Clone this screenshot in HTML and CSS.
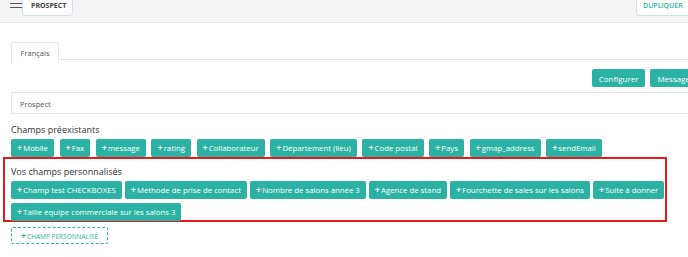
FILE: index.html
```html
<!DOCTYPE html>
<html lang="fr">
<head>
  <meta charset="UTF-8">
  <title>Prospect</title>
  <link rel="stylesheet" href="styles.css">
</head>
<body>

  <div class="topbar">
    <div class="topbar-left">
      <span class="burger"><i></i><i></i></span>
      <span class="crumb">PROSPECT</span>
    </div>
    <span class="dupliquer">DUPLIQUER</span>
  </div>

  <div class="page">
    <div class="tabs">
      <span class="tab">Français</span>
    </div>

    <div class="actions">
      <button class="btn">Configurer</button>
      <button class="btn">Message</button>
    </div>

    <div class="name-input">Prospect</div>

    <div class="section">
      <div class="section-title">Champs préexistants</div>
      <div class="chips">
        <span class="chip"><b>+</b>Mobile</span>
        <span class="chip"><b>+</b>Fax</span>
        <span class="chip"><b>+</b>message</span>
        <span class="chip"><b>+</b>rating</span>
        <span class="chip"><b>+</b>Collaborateur</span>
        <span class="chip"><b>+</b>Département (lieu)</span>
        <span class="chip"><b>+</b>Code postal</span>
        <span class="chip"><b>+</b>Pays</span>
        <span class="chip"><b>+</b>gmap_address</span>
        <span class="chip"><b>+</b>sendEmail</span>
      </div>
    </div>

    <div class="section custom">
      <div class="section-title">Vos champs personnalisés</div>
      <div class="chips">
        <span class="chip"><b>+</b>Champ test CHECKBOXES</span>
        <span class="chip"><b>+</b>Méthode de prise de contact</span>
        <span class="chip"><b>+</b>Nombre de salons année 3</span>
        <span class="chip"><b>+</b>Agence de stand</span>
        <span class="chip"><b>+</b>Fourchette de sales sur les salons</span>
        <span class="chip"><b>+</b>Suite à donner</span>
        <span class="chip"><b>+</b>Taille équipe commerciale sur les salons 3</span>
      </div>
    </div>

    <span class="add-custom"><b>+</b>CHAMP PERSONNALISÉ</span>
  </div>

</body>
</html>
```

FILE: styles.css
```css
body {
  margin: 0;
  font-family: "Open Sans", Arial, sans-serif;
  color: #333;
  background: #fff;
  overflow: hidden;
}
.topbar {
  height: 22px;
  background: #f4f4f4;
  border-bottom: 1px solid #e4e4e4;
  display: flex;
  justify-content: space-between;
  align-items: flex-start;
}
.topbar-left {
  display: flex;
  align-items: flex-start;
}
.burger {
  display: flex;
  flex-direction: column;
  gap: 3px;
  width: 12px;
  margin: 3px 0 0 10px;
}
.burger i {
  display: block;
  height: 1px;
  background: #555;
}
.crumb {
  height: 16px;
  width: 51px;
  box-sizing: border-box;
  border: 1px solid #cfe0f2;
  border-top: none;
  border-radius: 0 0 4px 4px;
  background: #fff;
  font-size: 7px;
  font-weight: 700;
  color: #444;
  padding: 1px 0 0 8px;
}
.dupliquer {
  height: 16px;
  width: 52px;
  box-sizing: border-box;
  border: 1px solid #c4e9e4;
  border-top: none;
  border-right: none;
  border-radius: 0 0 0 4px;
  background: #fff;
  color: #2fb2a5;
  font-size: 7px;
  font-weight: 600;
  padding: 1px 0 0 6px;
}
.page {
  padding-left: 11px;
}
.tabs {
  margin-top: 16px;
  border-bottom: 1px solid #e6e6e6;
  height: 20px;
}
.tab {
  display: inline-block;
  box-sizing: border-box;
  width: 48px;
  height: 21px;
  border: 1px solid #e6e6e6;
  border-bottom-color: #fff;
  border-radius: 2px 2px 0 0;
  background: #fff;
  font-size: 7.5px;
  color: #555;
  text-align: center;
  padding-top: 5px;
}
.actions {
  display: flex;
  justify-content: flex-end;
  gap: 5px;
  margin-top: 9px;
  margin-right: -9px;
}
.btn {
  height: 18px;
  padding: 0 7px;
  border: none;
  border-radius: 2px;
  background: #2bb2a5;
  color: #fff;
  font-family: inherit;
  font-size: 8px;
}
.name-input {
  margin-top: 5px;
  border: 1px solid #e6e6e6;
  border-right: none;
  font-size: 7.5px;
  color: #555;
  padding: 6px 0 0 8px;
  box-sizing: border-box;
  height: 22px;
}
.section {
  margin-top: 10px;
}
.section-title {
  font-size: 9px;
  color: #333;
  line-height: 12px;
}
.chips {
  display: flex;
  flex-wrap: wrap;
  gap: 4px 5.6px;
  margin-top: 3px;
}
.chip {
  height: 18px;
  line-height: 18px;
  padding: 0 6px;
  border-radius: 2px;
  background: #2bb2a5;
  color: #fff;
  font-size: 7.8px;
  white-space: nowrap;
}
.chip b,
.add-custom b {
  font-size: 9px;
  margin-right: 1px;
}
.custom {
  margin: 0 0 0 -8px;
  width: 664px;
  height: 65px;
  box-sizing: border-box;
  border: 2px solid #e31b1b;
  padding: 7px 0 0 6px;
}
.custom .chips {
  gap: 4px 3px;
}
.add-custom {
  display: inline-block;
  margin-top: 2px;
  width: 97px;
  height: 17px;
  line-height: 16px;
  box-sizing: border-box;
  border: 1px dashed #2bb2a5;
  border-radius: 2px;
  color: #2bb2a5;
  font-size: 6.5px;
  text-align: center;
}
```
